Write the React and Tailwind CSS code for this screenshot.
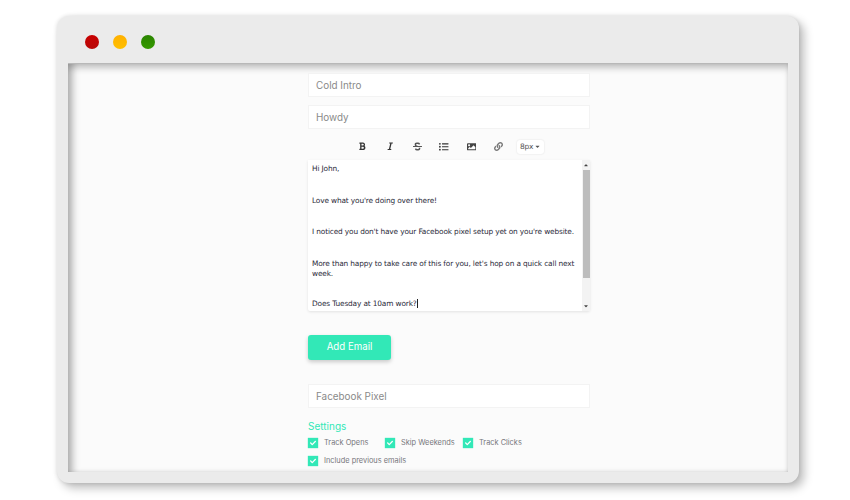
import React from 'react';
import { FaBold, FaItalic, FaStrikethrough, FaListUl, FaImage, FaLink, FaCheck, FaCaretDown, FaCaretUp } from 'react-icons/fa';

const Field = ({ value, className }) => {
    return (
        <div className={`h-[24px] bg-white border border-[#f3f3f3] pl-[7px] flex items-center text-[9.9px] leading-[12px] text-[#8a8a8a] ${className}`}>
            {value}
        </div>
    );
};

const Check = ({ label, className }) => {
    return (
        <div className={`flex items-center ${className}`}>
            <span className="w-[10px] h-[10px] bg-[#32e8b7] flex items-center justify-center shrink-0 shadow-[0_0_1px_#32e8b7]">
                <FaCheck className="text-white text-[6px]" />
            </span>
            <span className="ml-[6px] text-[7.4px] leading-[10px] text-[#77777c] whitespace-nowrap">{label}</span>
        </div>
    );
};

const App = () => {
    return (
        <div className="w-[850px] h-[500px] bg-white pt-[16px] pl-[57px] overflow-hidden font-['Inter','Open_Sans',sans-serif]">
            <div className="w-[742px] h-[467px] bg-[#ebebeb] rounded-[12px] shadow-[5px_5px_10px_rgba(0,0,0,0.26),0_0_4px_rgba(0,0,0,0.12)] flex flex-col">
                <div className="h-[47px] shrink-0 flex items-center pl-[28px] gap-[14px] pt-[5px]">
                    <span className="w-[14px] h-[14px] rounded-full bg-gradient-to-b from-[#c80000] to-[#b80808]" />
                    <span className="w-[14px] h-[14px] rounded-full bg-gradient-to-b from-[#ffb000] to-[#ffc000]" />
                    <span className="w-[14px] h-[14px] rounded-full bg-gradient-to-b from-[#2a8400] to-[#359a00]" />
                </div>
                <div className="mx-[11px] h-[409px] bg-[#fbfbfb] overflow-hidden border-t border-[#b8b8b8] shadow-[inset_0_6px_7px_-2px_rgba(0,0,0,0.22),inset_8px_0_7px_-3px_rgba(0,0,0,0.26),inset_-3px_0_3px_-2px_rgba(0,0,0,0.06),inset_0_-3px_3px_-2px_rgba(0,0,0,0.06)]">
                    <div className="w-[282px] ml-[240px] pt-[9px]">
                        <Field value="Cold Intro" />
                        <Field value="Howdy" className="mt-[8px]" />

                        <div className="mt-[10px] h-[15px] flex items-center text-[#333333]">
                            <FaBold className="ml-[50px] text-[8.5px]" />
                            <FaItalic className="ml-[19px] text-[8.5px]" />
                            <FaStrikethrough className="ml-[19px] text-[9px] text-[#555555]" />
                            <FaListUl className="ml-[17px] text-[9.5px]" />
                            <FaImage className="ml-[18px] text-[9.5px] text-[#444444]" />
                            <FaLink className="ml-[18px] text-[9px] text-[#777777]" />
                            <div className="ml-[14px] w-[27px] h-[14px] bg-white rounded-[3px] shadow-[0_0_2px_rgba(0,0,0,0.12)] flex items-center justify-center text-[7.5px] text-[#555555] font-['DejaVu_Sans',sans-serif] tracking-[-0.3px]">
                                8px
                                <FaCaretDown className="text-[7px] ml-[1px]" />
                            </div>
                        </div>

                        <div className="mt-[6px] h-[151px] bg-white flex shadow-[0_1px_3px_rgba(0,0,0,0.1)] rounded-b-[2px] overflow-hidden">
                            <div className="flex-1 pl-[4px] pt-[4px] text-[7.4px] tracking-[-0.15px] leading-[10px] text-[#2b2b3a] font-['DejaVu_Sans',sans-serif]">
                                <p>Hi John,</p>
                                <p className="mt-[21.5px]">Love what you're doing over there!</p>
                                <p className="mt-[21.5px]">I noticed you don't have your Facebook pixel setup yet on you're website.</p>
                                <p className="mt-[21.5px]">More than happy to take care of this for you, let's hop on a quick call next week.</p>
                                <p className="mt-[20.5px]">Does Tuesday at 10am work?<span className="border-l border-[#222222]" /></p>
                            </div>
                            <div className="w-[8px] bg-[#f3f3f3] flex flex-col items-center">
                                <FaCaretUp className="text-[6px] text-[#444444] mt-[2px] h-[6px]" />
                                <div className="w-[7px] h-[108px] bg-[#bdbdbd] mt-[2px]" />
                                <FaCaretDown className="text-[6px] text-[#444444] mt-auto mb-[2px] h-[6px]" />
                            </div>
                        </div>

                        <div className="mt-[24px] w-[83px] h-[25px] bg-[#32e8b7] rounded-[3px] pb-[1px] flex items-center justify-center text-white text-[9.7px] shadow-[0_2px_4px_rgba(0,0,0,0.2)]">
                            Add Email
                        </div>

                        <Field value="Facebook Pixel" className="mt-[24px]" />

                        <p className="mt-[12px] text-[10px] leading-[13px] text-[#32e8b7]">Settings</p>

                        <div className="mt-[5px] flex">
                            <Check label="Track Opens" className="w-[77px]" />
                            <Check label="Skip Weekends" className="w-[78px]" />
                            <Check label="Track Clicks" />
                        </div>
                        <Check label="Include previous emails" className="mt-[8px]" />
                    </div>
                </div>
            </div>
        </div>
    );
};

export default App;
